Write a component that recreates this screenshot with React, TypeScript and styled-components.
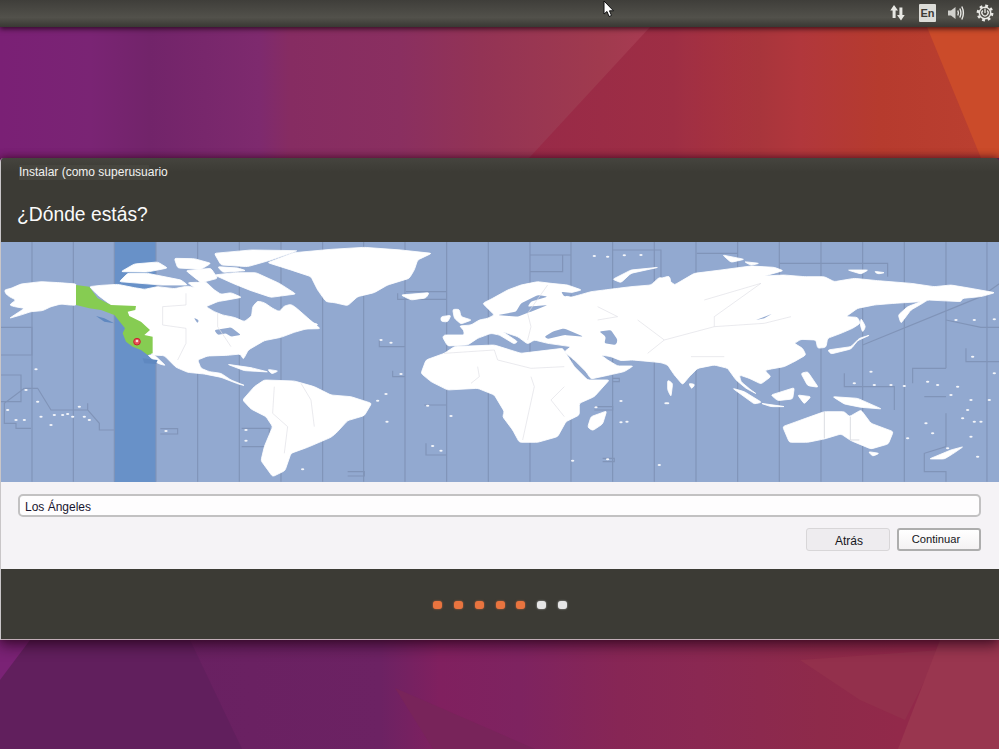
import styled, { createGlobalStyle } from "styled-components"

const GlobalStyle = createGlobalStyle`
    html, body {
        margin: 0;
        padding: 0;
        overflow: hidden;
        background: #621f5e;
    }
    * { box-sizing: border-box; }
`

const Desktop = styled.div`
    position: relative;
    width: 999px;
    height: 749px;
    display: flex;
    flex-direction: column;
    font-family: "Liberation Sans", Arial, sans-serif;
`

const Panel = styled.header`
    position: relative;
    z-index: 3;
    flex: 0 0 27px;
    display: flex;
    align-items: center;
    justify-content: flex-end;
    padding: 0 5px 1px 0;
    background: linear-gradient(#3f3e3a, #52514b 65%, #393833);
    box-shadow: 0 2px 5px rgba(20, 0, 10, 0.7);
`

const PanelIcon = styled.svg<{ $gap: number }>`
    display: block;
    margin-left: ${({ $gap }) => $gap}px;
    color: #e8e8e4;
`

const LangBadge = styled.span`
    margin-left: 13px;
    width: 17px;
    height: 18px;
    display: flex;
    align-items: center;
    justify-content: center;
    background: #dcdcd8;
    color: #3c3b37;
    font-size: 11px;
    font-weight: 700;
    border-radius: 1px;
`

const Cursor = styled.svg`
    position: absolute;
    z-index: 5;
    left: 603px;
    top: 0;
`

const WallpaperBand = styled.div<{ $height: number; $colors: string }>`
    position: relative;
    flex: 0 0 ${({ $height }) => $height}px;
    background: linear-gradient(90deg, ${({ $colors }) => $colors});
`

const Facets = styled.svg`
    position: absolute;
    inset: 0;
    width: 100%;
    height: 100%;
`

const WindowShadow = styled.div`
    position: relative;
    z-index: 2;
    flex: 0 0 482px;
    border-radius: 4px 4px 0 0;
    box-shadow: 0 6px 14px rgba(30, 0, 20, 0.6), 0 -1px 7px rgba(60, 0, 30, 0.6);
`

const Window = styled.main`
    height: 100%;
    display: flex;
    flex-direction: column;
    border-radius: 4px 4px 0 0;
    overflow: hidden;
    border-left: 1px solid #c9c6c8;
    border-bottom: 1px solid #c2aeb8;
`

const Head = styled.div`
    flex: 0 0 84px;
    padding: 7px 18px 0;
    background: linear-gradient(#45443e, #3c3b35 14px);
`

const Title = styled.div`
    color: #f2f2f0;
    font-size: 12px;
    line-height: 15px;
    background: linear-gradient(90deg, #47463f 130px, transparent 130px);
`

const Heading = styled.h1`
    margin: 23px 0 0 -2px;
    color: #fafafa;
    font-size: 19.3px;
    font-weight: 400;
    line-height: 24px;
`

const MapFrame = styled.div`
    flex: 0 0 240px;
    background: #92a9d0;
`

const WorldMap = styled.svg`
    display: block;
    filter: blur(0.45px);
`

const Form = styled.div`
    flex: 0 0 87px;
    display: flex;
    flex-direction: column;
    gap: 11px;
    padding: 12px 18px 0 17px;
    background: #f5f3f6;
`

const CityInput = styled.div`
    height: 23px;
    display: flex;
    align-items: center;
    padding: 2px 0 0 5px;
    background: #fefdfe;
    border: 2px solid #c2c1c2;
    border-radius: 5px;
    color: #17142e;
    font-size: 12px;
`

const Buttons = styled.div`
    display: flex;
    justify-content: flex-end;
    gap: 7px;
`

const Button = styled.button<{ $primary?: boolean }>`
    width: 84px;
    height: 23px;
    padding: ${({ $primary }) => ($primary ? "0 6px 1px 0" : "3px 0 0 2px")};
    font-family: inherit;
    font-size: ${({ $primary }) => ($primary ? 11.2 : 12)}px;
    color: #15151a;
    border-radius: 3px;
    border: ${({ $primary }) => ($primary ? "2px solid #adadad" : "1px solid #d8d6d8")};
    background: ${({ $primary }) => ($primary ? "linear-gradient(#fff, #f4f2f3)" : "#eeecef")};
`

const Footer = styled.div`
    flex: 1;
    display: flex;
    align-items: center;
    justify-content: center;
    gap: 11.8px;
    padding-top: 2px;
    background: #3c3b35;
`

const Dot = styled.span<{ $done: boolean }>`
    width: 9px;
    height: 8px;
    border-radius: 3px;
    background: ${({ $done }) => ($done ? "#e9743f" : "#e6e6e6")};
    box-shadow: 0 0 2px ${({ $done }) => ($done ? "#c9683e" : "#bdbdbd")};
`

// closes a list of "x,y" points, only the very corner is rounded so coasts keep their shape
const outline = (points: string) => {
    const p = points.trim().split(/\s+/).map((s) => s.split(",").map(Number))
    const toward = (a: number[], b: number[]) => {
        const len = Math.hypot(b[0] - a[0], b[1] - a[1]) || 1
        const r = Math.min(0.4, 6 / len)
        return `${a[0] + (b[0] - a[0]) * r},${a[1] + (b[1] - a[1]) * r}`
    }
    return p.map((pt, i) => {
        const prev = p[(i + p.length - 1) % p.length]
        const next = p[(i + 1) % p.length]
        return `${i === 0 ? "M" : "L"}${toward(pt, prev)}Q${pt[0]},${pt[1]} ${toward(pt, next)}`
    }).join("") + "Z"
}

// tz lines and land are traced in three tiles, each at 3x, so the coords stay readable
const tile1Lines = [
    "M93,0V725M217,0V725M340,0V725M465,0V725M590,0V725M715,0V725M840,0V725M965,0V725",
    "M0,262H93V345H0M0,405H60V485H0M70,445L10,490V550H45V565H90",
    "M70,445H110L150,510H260V490M260,510L295,550V570H340M478,566H530V582H478",
    "M722,565H805V620H722",
]

const tile2Lines = [
    "M98,0V725M222,0V725M347,0V725M472,0V725M597,0V725M720,0V725M845,0V725M970,0V725",
    "M597,45H720M597,95H695V45M845,30H990V130",
    "M225,155H347M200,160V178H347M145,300V320H222M185,392V410H222",
    "M280,495H347M285,610V645H347M50,695H100V708H50M815,655H850V665H815",
    "M845,415H865V425H845M790,500H845V510H790",
]

const tile3Lines = [
    "M105,0V725M230,0V725M355,0V725M480,0V725M605,0V725M730,0V725M855,0V385M855,520V620M978,0V725",
    "M107,40H230M355,70H680V110M1017,130L960,170L605,315",
    "M855,240L960,262H1017M915,325V365H1017M550,400V440H700V510",
    "M855,385H755V430M790,470H855M855,620L790,640V695H855V725",
]

const tile1Land = [
    // Alaska
    "10,150 30,145 60,132 120,125 175,128 226,132 226,196 205,195 180,192 150,200 125,212 90,215 60,225 25,235 60,212 70,205 40,200 25,195 45,180 25,170 15,162",
    // rest of North America, the west side runs under the green zone
    "265,140 300,136 350,133 400,143 430,148 470,140 520,146 560,138 600,148 630,143 660,163 690,158 722,172 690,178 650,185 615,200 640,215 665,225 700,232 730,245 752,228 755,200 770,183 790,188 815,205 835,215 850,198 870,193 885,203 925,238 958,266 915,267 880,277 840,292 790,302 742,330 727,358 718,342 680,346 620,348 590,360 600,385 625,395 660,400 690,420 732,437 712,432 660,412 610,402 560,397 525,382 490,347 450,345 440,300 400,260 350,210 290,165",
    // Greenland
    "800,68 880,38 990,28 1090,22 1200,30 1292,40 1250,60 1240,90 1225,115 1160,135 1120,158 1070,170 1040,197 1000,188 975,185 950,150 930,110 870,90",
    // arctic islands
    "355,125 380,100 440,100 540,120 560,135 480,135",
    "360,95 400,72 470,66 500,84 440,96",
    "520,55 580,56 630,70 600,88 530,84",
    "640,40 750,30 890,32 810,60 740,80 660,75",
    "555,92 630,85 650,115 600,128",
    "640,105 700,98 765,98 835,130 885,162 810,172 750,152 700,132",
    "560,128 615,126 640,150 590,150",
    "650,80 710,84 735,92 665,97",
    "915,243 952,253 930,267",
    // Caribbean
    "680,373 750,383 802,396 730,392",
    "800,388 832,393 812,402",
    // Baja
    "440,345 460,345 494,377 470,370",
    // South America
    "725,480 760,440 790,420 880,423 940,440 990,465 1050,470 1112,490 1090,527 1040,542 1005,580 990,592 920,622 870,640 852,692 815,710 780,662 790,620 815,560 795,530 750,507",
]

const tile2Land = [
    // Africa
    "270,400 285,360 340,340 370,320 490,315 570,340 695,325 730,380 770,420 835,420 790,470 745,490 745,525 705,545 680,590 620,607 565,607 545,570 515,530 520,515 490,465 440,445 350,450 300,425",
    // Eurasia, the far east half is tile 3 shifted by 990
    "335,292 340,285 400,285 398,270 385,258 420,255 445,240 470,235 490,225 470,205 455,190 485,175 530,150 570,135 620,125 660,130 710,135 752,150 720,158 695,165 720,172 745,165 780,155 820,150 860,145 900,140 960,135 985,112 1015,120 1030,135 1090,100 1170,90 1260,78 1330,82 1357,92 1300,108 1360,105 1420,110 1480,110 1510,125 1570,115 1640,122 1740,130 1810,140 1860,135 1920,145 1992,158 1950,170 1895,175 1890,185 1790,180 1775,190 1740,210 1710,250 1702,225 1730,200 1770,185 1690,190 1630,195 1580,205 1545,230 1580,232 1588,250 1565,265 1530,280 1490,295 1485,322 1460,325 1455,300 1410,298 1390,310 1415,325 1425,345 1390,365 1360,380 1315,388 1302,392 1320,410 1290,432 1255,415 1225,405 1230,425 1260,450 1277,462 1245,445 1215,420 1190,385 1150,375 1100,385 1075,410 1055,434 1030,405 1010,375 990,368 960,365 905,360 870,362 840,350 810,345 830,360 860,378 907,378 880,395 835,405 780,417 765,395 735,365 700,335 720,320 650,310 610,300 590,312 560,290 515,275 560,305 550,312 505,285 480,280 440,295 410,315 350,318",
    "365,208 385,208 390,230 422,240 390,252 370,235",
    "330,230 360,226 350,246 330,244",
    "210,165 295,158 285,174 240,180",
    "845,118 900,90 982,82 900,100 870,128",
    "770,562 780,530 827,513 815,552 785,572",
    "990,115 1015,108 1020,125 995,130",
]

const tile2Seas = [
    "500,225 555,215 570,190 620,165 650,170 600,185 590,200 650,195 600,215 560,230",
    "640,290 665,275 700,265 757,290 700,285 650,297",
    "805,275 840,270 860,300 855,315 820,310 825,290",
    "690,155 730,160 700,170",
]

const tile3Land = [
    "185,45 250,58 210,67",
    "250,65 295,70 270,76",
    "560,90 622,90 600,102",
    "640,94 672,98 650,102",
    "500,330 570,320 595,295 627,285 590,302 570,327 510,342",
    "600,235 614,260 605,277 598,255",
    "420,400 440,395 472,442 440,437",
    "330,465 400,443 395,477 350,482",
    "215,445 250,455 302,487 280,492",
    "300,490 372,500 330,500",
    "410,465 450,470 430,492",
    "515,470 590,475 662,507 600,502 550,492",
    "365,560 420,540 490,515 550,515 565,530 600,510 630,550 697,575 682,612 630,627 570,602 540,582 490,597 440,607 385,607",
    "622,635 655,640 635,649",
    "805,657 870,630 907,620 875,642 850,657",
    "83,430 102,433 92,447",
    "20,420 35,430 30,470 20,450",
]

const tile1Dots = [
    [20, 510], [45, 540], [70, 540], [110, 485], [120, 530], [150, 555], [75, 450], [105, 388],
    [160, 525], [185, 525], [200, 522], [215, 530], [235, 500], [250, 530], [265, 540], [735, 570],
    [735, 602], [905, 688], [495, 573],
]

const tile2Dots = [
    [150, 300], [180, 308], [210, 402], [165, 462], [140, 482], [168, 545], [290, 497], [360, 528],
    [305, 618], [330, 632], [725, 662], [830, 658], [985, 675], [870, 483], [870, 547], [888, 545],
    [795, 502], [1005, 490], [790, 48], [830, 50], [880, 46], [930, 45],
]

const tile3Dots = [
    [630, 395], [580, 430], [640, 435], [690, 435], [730, 438], [800, 425], [830, 435], [890, 440],
    [870, 465], [930, 480], [985, 480], [920, 510], [960, 545], [930, 590], [795, 550], [815, 580],
    [740, 595], [935, 350], [1000, 400], [20, 490], [885, 240], [940, 240], [1000, 238], [940, 545],
    [905, 535], [860, 625], [950, 650],
]

const Lines = ({ paths }: { paths: string[] }) => (
    <g fill="none" stroke="#8094b8" strokeWidth="3.5">
        {paths.map((d) => <path key={d} d={d} />)}
    </g>
)

const Dots = ({ points }: { points: number[][] }) => (
    <g fill="#f4f6fa">
        {points.map(([x, y]) => <ellipse key={`${x}-${y}`} cx={x} cy={y} rx="5" ry="3" />)}
    </g>
)

const Land = ({ paths }: { paths: string[] }) => (
    <g fill="#fff" stroke="#fff" strokeWidth="2.5" strokeLinejoin="round">
        {paths.map((d) => <path key={d} d={outline(d)} />)}
    </g>
)

const MapDrawing = () => (
    <WorldMap width="999" height="240" viewBox="0 0 999 240">
        <rect x="113" width="42" height="240" fill="#6891c8" />
        <g transform="translate(0 -2) scale(0.3333)">
            <Lines paths={tile1Lines} />
        </g>
        <g transform="translate(330 -2) scale(0.3333)">
            <Lines paths={tile2Lines} />
        </g>
        <g transform="translate(660 -2) scale(0.3333)">
            <Lines paths={tile3Lines} />
        </g>
        <g transform="translate(0 -2) scale(0.3333)">
            <Land paths={tile1Land} />
            <Dots points={tile1Dots} />
            <path
                d="M225,135L265,140L290,175L330,195L405,198L403,210L380,215L385,228L420,245L447,270L430,285L455,290V340L440,345L420,330L395,320L375,305L365,280L372,265L340,225L300,210L265,205L225,195Z"
                fill="#86cc52"
            />
            <path d="M285,228L310,235L340,250L310,245Z" fill="#5f88c0" />
            <path d="M425,355L470,360L465,372L430,370Z" fill="#5f88c0" />
            <path d={outline("640,270 690,262 720,285 690,290 675,280 650,285")} fill="#92a9d0" />
            <path d={outline("578,233 594,240 590,250")} fill="#92a9d0" />
            <circle cx="408" cy="305" r="10" fill="#e8505a" stroke="#c4262c" strokeWidth="3" />
            <circle cx="408" cy="303" r="4" fill="#fbdada" />
            <path
                d="M485,200L555,195V160M485,200V255L555,265V310L530,360M650,220V260L690,320M820,440L815,520L860,560L850,640M900,430L930,480L940,560"
                fill="none"
                stroke="#dfe0e5"
                strokeWidth="2"
            />
        </g>
        <g transform="translate(330 -2) scale(0.3333)">
            <Land paths={tile2Land} />
            <Dots points={tile2Dots} />
            <g fill="#92a9d0">
                {tile2Seas.map((d) => <path key={d} d={outline(d)} />)}
            </g>
            <path
                d="M340,340L490,330L500,360L600,385L700,380M600,410L610,440L575,600M440,380L445,410L420,430M590,300L600,260L590,220L650,135M800,200L860,230L800,240M920,240L1000,300L950,340M700,440L660,480L700,530M1120,180L1290,130L1150,230L1150,260L1300,250L1380,230M1000,300L1150,260M1080,350L1180,350"
                fill="none"
                stroke="#dfe0e5"
                strokeWidth="2"
            />
        </g>
        <g transform="translate(660 -2) scale(0.3333)">
            <Land paths={tile3Land} />
            <Dots points={tile3Dots} />
            <path d="M490,515V595M568,530V600H595" fill="none" stroke="#d4d6dc" strokeWidth="2.5" />
            <path d="M285,240L332,222L310,235Z" fill="#92a9d0" />
        </g>
    </WorldMap>
)

const steps = [true, true, true, true, true, false, false]

export default function App() {
    return (
        <Desktop>
            <GlobalStyle />
            <Panel>
                <PanelIcon $gap={0} width="16" height="18" viewBox="0 0 16 18" fill="currentColor">
                    <path d="M4,1L8,6.500H5.600V14H2.600V6.500H0.300Z" />
                    <path d="M11,16.500L7,11H9.400V3.500H12.400V11H14.700Z" />
                </PanelIcon>
                <LangBadge>En</LangBadge>
                <PanelIcon $gap={11} width="18" height="16" viewBox="0 0 18 16" fill="none" stroke="currentColor">
                    <path d="M1,5.500H4L8.500,2V14L4,10.500H1Z" fill="currentColor" stroke="none" opacity="0.85" />
                    <path d="M10.800,5.500Q12,8 10.800,10.500" strokeWidth="1.400" />
                    <path d="M12.800,3.500Q15,8 12.800,12.500" strokeWidth="1.400" />
                    <path d="M14.800,1.500Q18,8 14.800,14.500" strokeWidth="1.400" />
                </PanelIcon>
                <PanelIcon $gap={11} width="18" height="18" viewBox="0 0 18 18" fill="none" stroke="currentColor">
                    <circle cx="9" cy="9" r="7.200" strokeWidth="2.400" strokeDasharray="2.800 2.850" />
                    <circle cx="9" cy="9" r="5.700" strokeWidth="1.500" />
                    <path d="M6.800,6.500A3.100,3.100 0 1 0 11.200,6.500" strokeWidth="1.300" />
                    <path d="M9,4.500V9" strokeWidth="1.300" />
                </PanelIcon>
            </Panel>
            <Cursor width="12" height="18" viewBox="0 0 12 18">
                <path d="M1,1V14L4,11.500L6,16.500L8.500,15.500L6.500,10.800H10.500Z" fill="#fff" stroke="#111" strokeWidth="1" />
            </Cursor>

            <WallpaperBand
                $height={131}
                $colors="#7a2075 0, #7a2474 90px, #72246a 150px, #7e2a6e 260px, #862c62 290px, #8a2f60 400px, #933355 480px, #a03a4e 600px, #a83b52 650px, #a83040 700px, #a8353c 760px, #b1373c 800px, #b63b2e 880px, #bb4030 999px"
            >
                <Facets viewBox="0 0 999 131" preserveAspectRatio="none">
                    <defs>
                        <linearGradient id="topFacet" gradientUnits="userSpaceOnUse" x1="530" y1="0" x2="770" y2="0">
                            <stop offset="0" stopColor="#982a48" />
                            <stop offset="0.6" stopColor="#9e2e44" />
                            <stop offset="1" stopColor="#a8353c" stopOpacity="0" />
                        </linearGradient>
                    </defs>
                    <path d="M650,0L529,131H770V0Z" fill="url(#topFacet)" />
                    <path d="M927,0L981,131H999V0Z" fill="#cb4b2a" />
                </Facets>
            </WallpaperBand>

            <WindowShadow>
                <Window>
                    <Head>
                        <Title>Instalar (como superusuario</Title>
                        <Heading>¿Dónde estás?</Heading>
                    </Head>
                    <MapFrame>
                        <MapDrawing />
                    </MapFrame>
                    <Form>
                        <CityInput>Los Ángeles</CityInput>
                        <Buttons>
                            <Button>Atrás</Button>
                            <Button $primary>Continuar</Button>
                        </Buttons>
                    </Form>
                    <Footer>
                        {steps.map((done, i) => <Dot key={`step-${i}`} $done={done} />)}
                    </Footer>
                </Window>
            </WindowShadow>

            <WallpaperBand
                $height={109}
                $colors="#641f60 0, #6a2162 250px, #6c2263 380px, #80205f 440px, #7e2360 520px, #872655 620px, #8a2852 700px, #8e2a4a 820px, #92294a 900px"
            >
                <Facets viewBox="0 0 999 109" preserveAspectRatio="none">
                    <path d="M0,0H190L242,109H0Z" fill="#611f5d" />
                    <path d="M395,48L535,109H433Z" fill="#78245a" />
                    <path d="M800,20L940,10L905,80L860,60Z" fill="#93304c" />
                    <path d="M940,0L898,109H999V0Z" fill="#99364f" />
                    <path d="M0,0H30L0,40Z" fill="#7a2275" />
                </Facets>
            </WallpaperBand>
        </Desktop>
    )
}
